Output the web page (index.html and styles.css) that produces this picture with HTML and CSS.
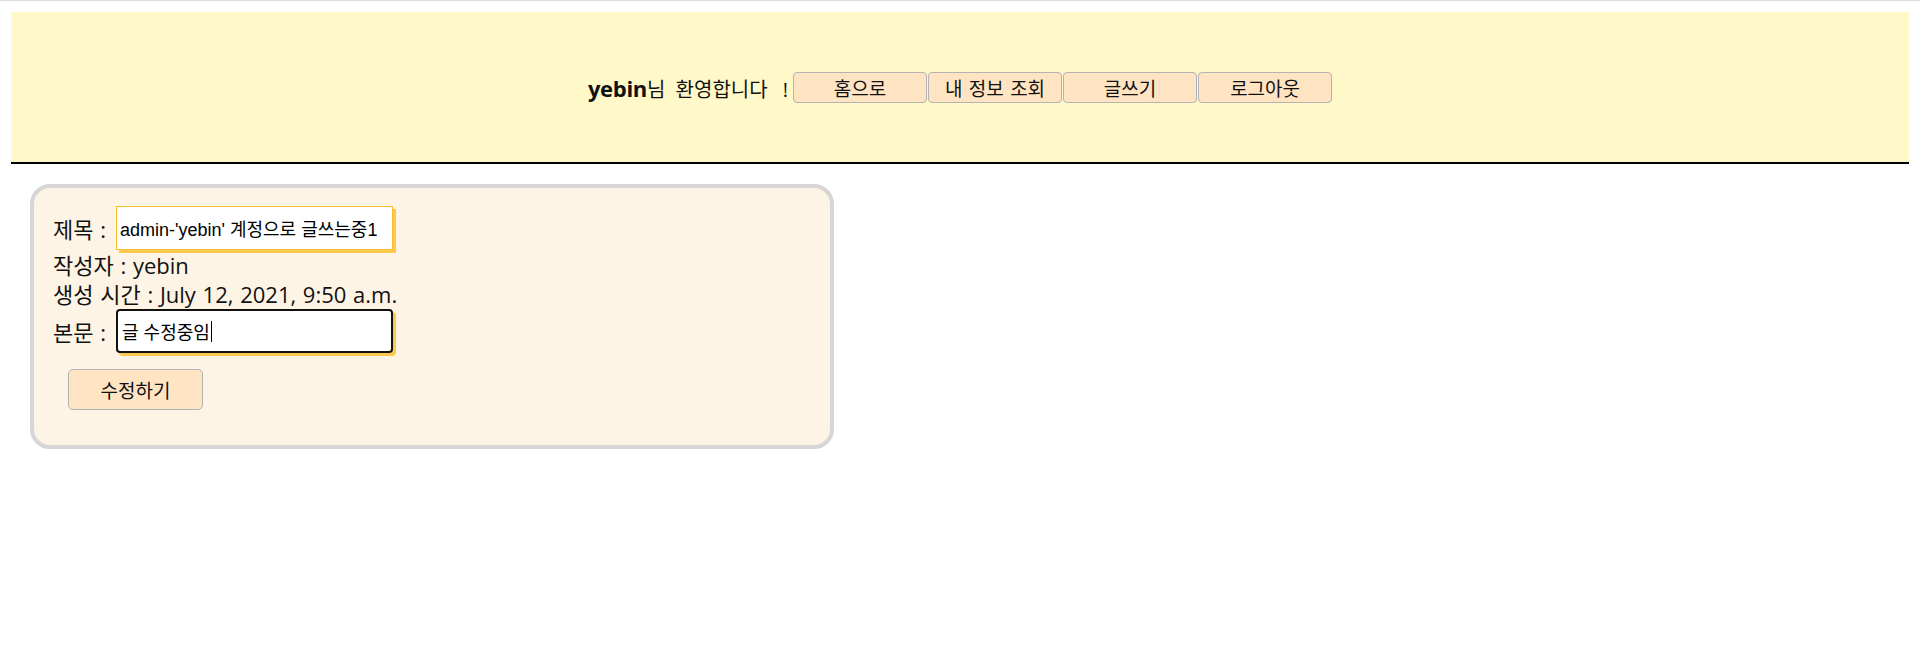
FILE: index.html
```html
<!DOCTYPE html>
<html lang="ko">
<head>
<meta charset="utf-8">
<title>글 수정</title>
<link rel="stylesheet" href="styles.css">
</head>
<body>
<div class="topline"></div>
<header class="header">
  <span class="greeting"><b>yebin</b>님 환영합니다 <span class="bang">!</span></span>
  <nav class="nav">
    <button class="nav-btn" type="button">홈으로</button>
    <button class="nav-btn" type="button">내 정보 조회</button>
    <button class="nav-btn" type="button">글쓰기</button>
    <button class="nav-btn" type="button">로그아웃</button>
  </nav>
</header>
<form class="card">
  <div class="row field-row">
    <span class="label">제목 :</span>
    <input class="field field-title" type="text" value="admin-'yebin' 계정으로 글쓰는중1">
  </div>
  <div class="row text-row"><span class="label">작성자 : yebin</span></div>
  <div class="row text-row"><span class="label">생성 시간 : July 12, 2021, 9:50 a.m.</span></div>
  <div class="row field-row">
    <span class="label">본문 :</span>
    <div class="field field-focus"><span>글 수정중임</span><span class="caret"></span></div>
  </div>
  <button class="submit-btn" type="button">수정하기</button>
</form>
</body>
</html>
```
FILE: styles.css
```css
html, body {
  margin: 0;
  padding: 0;
  background: #ffffff;
}

body {
  font-family: "Open Sans", "Noto Sans CJK KR", sans-serif;
  color: #111;
}

.topline {
  height: 1px;
  background: #dedede;
}

.header {
  margin: 11px 11px 0;
  height: 150px;
  background: #fff8c8;
  border-bottom: 2px solid #000;
  display: flex;
  justify-content: center;
  align-items: center;
  gap: 5px;
}

.greeting {
  font-size: 20px;
  line-height: 28px;
  padding-top: 3px;
  word-spacing: 5px;
}

.greeting b {
  font-size: 22px;
  font-weight: 700;
  letter-spacing: -0.3px;
}

.bang {
  margin-left: 5px;
}

.nav {
  display: flex;
  gap: 1px;
}

.nav-btn {
  width: 134px;
  height: 31px;
  padding: 0;
  background: #ffe4c4;
  border: 1px solid #b3b3b3;
  border-radius: 4px;
  font-family: "Noto Sans CJK KR", sans-serif;
  font-size: 19px;
  line-height: 1;
  word-spacing: 1px;
  color: #111;
}

.card {
  box-sizing: border-box;
  width: 804px;
  margin: 20px 0 0 30px;
  padding: 18px 19px 35px;
  background: #fdf4e6;
  border: 4px solid #d6d6d6;
  border-radius: 20px;
  display: flex;
  flex-direction: column;
  align-items: flex-start;
}

.row {
  display: flex;
  align-items: center;
  gap: 10px;
}

.label {
  font-size: 22px;
  word-spacing: 1px;
  white-space: nowrap;
}

.text-row {
  height: 29px;
  line-height: 29px;
}

.field-row + .text-row {
  margin-top: 1px;
}

.field {
  box-sizing: border-box;
  width: 277px;
  height: 44px;
  margin: 0;
  background: #fff;
  color: #000;
  font-size: 18px;
}

.field-title {
  padding: 0 3px;
  border: 1px solid #f9bd2d;
  border-radius: 0;
  box-shadow: 3px 3px 0 #fcc94c;
  font-family: "Liberation Sans", "Noto Sans CJK KR", sans-serif;
  outline: none;
}

.field-focus {
  padding: 0 4px;
  border: 2px solid #111;
  border-radius: 4px;
  box-shadow: 3px 3px 0 #fcc94c;
  font-family: "Noto Sans CJK KR", sans-serif;
  display: flex;
  align-items: center;
}

.caret {
  display: inline-block;
  width: 1px;
  height: 21px;
  background: #000;
  margin-left: 1px;
}

.submit-btn {
  margin: 16px 0 0 15px;
  width: 135px;
  height: 41px;
  padding: 0;
  background: #ffe4c4;
  border: 1px solid #b3b3b3;
  border-radius: 5px;
  font-family: "Noto Sans CJK KR", sans-serif;
  font-size: 19px;
  line-height: 1;
  color: #111;
}
```
